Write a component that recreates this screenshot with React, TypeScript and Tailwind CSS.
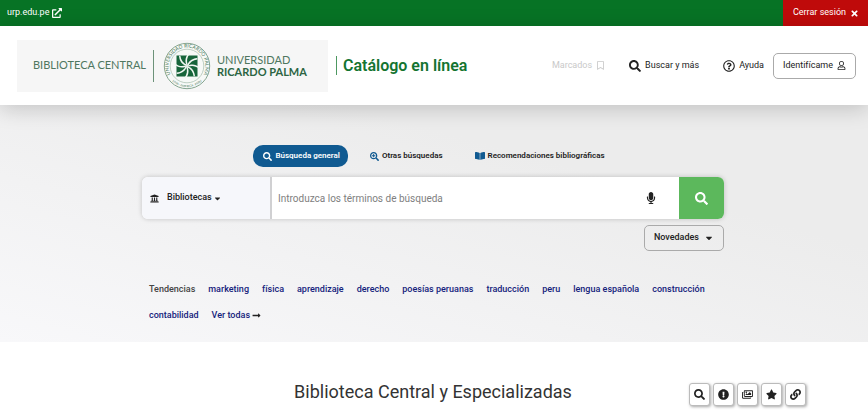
import {
  FaBookOpen,
  FaCaretDown,
  FaExclamationCircle,
  FaExternalLinkAlt,
  FaLink,
  FaLongArrowAltRight,
  FaMicrophone,
  FaRegBookmark,
  FaRegImages,
  FaRegQuestionCircle,
  FaRegUser,
  FaSearch,
  FaSearchPlus,
  FaStar,
  FaTimes,
  FaUniversity,
} from "react-icons/fa";

const trends = [
  "marketing",
  "física",
  "aprendizaje",
  "derecho",
  "poesías peruanas",
  "traducción",
  "peru",
  "lengua española",
  "construcción",
  "contabilidad",
];

const tools = [
  { label: "Buscar", Icon: FaSearch },
  { label: "Información", Icon: FaExclamationCircle },
  { label: "Imágenes", Icon: FaRegImages },
  { label: "Favoritos", Icon: FaStar },
  { label: "Enlace", Icon: FaLink },
];

const blades = [0, 45, 90, 135, 180, 225, 270, 315];

function Seal() {
  return (
    <svg viewBox="-24 -24 48 48" className="size-12 shrink-0" aria-hidden="true">
      <defs>
        <path id="ring-top" d="M-13 13 A18.4 18.4 0 1 1 13 13" />
        <path id="ring-bottom" d="M-15 15 A21.2 21.2 0 0 0 15 15" />
      </defs>
      <circle r="22.7" fill="#f7f9f7" stroke="#789c85" strokeWidth="0.9" />
      <circle r="16.8" fill="none" stroke="#a4bcab" strokeWidth="0.7" />
      <text fontSize="5" fill="#4d7c5e" fontFamily="Lato, sans-serif">
        <textPath href="#ring-top" startOffset="50%" textAnchor="middle">
          UNIVERSIDAD RICARDO PALMA
        </textPath>
      </text>
      <text fontSize="3" fill="#4d7c5e" fontFamily="Lato, sans-serif">
        <textPath href="#ring-bottom" startOffset="50%" textAnchor="middle">
          LIMA · AMERICA · PERU
        </textPath>
      </text>
      <rect x="-10.5" y="-10.5" width="21" height="21" fill="#17653a" />
      {blades.map((angle) => (
        <path
          key={angle}
          d="M0 0 C1 -4 4 -7.5 10.3 -8 L10.3 -6.6 C6 -6 3 -4 1.2 0Z"
          fill="#f1f7f2"
          transform={`rotate(${angle})`}
        />
      ))}
    </svg>
  );
}

export default function App() {
  return (
    <div className="min-h-screen bg-white font-[Roboto,'Liberation_Sans',sans-serif] text-[9px] text-[#222]">
      <div className="flex h-[26px] items-stretch justify-between bg-[#077325] text-white">
        <a href="#urp" className="flex items-center gap-[3px] pl-[7px]">
          urp.edu.pe <FaExternalLinkAlt className="size-[10px]" />
        </a>
        <button className="flex items-center gap-1 bg-[#bf0a0a] pr-[9px] pl-[10px]">
          Cerrar sesión <FaTimes className="size-[9px]" />
        </button>
      </div>

      <header className="relative flex h-[79px] items-center justify-between bg-white pr-3 pl-[17px] shadow-[0_4px_20px_rgba(0,0,0,0.18)]">
        <div className="flex items-center">
          <div className="flex h-[52px] w-[311px] items-center bg-[#f6f6f6] pl-4 font-[Lato,sans-serif] text-[11px] text-[#4f7760]">
            <span className="w-[120px] whitespace-nowrap">BIBLIOTECA CENTRAL</span>
            <span className="mr-[9px] h-8 w-px bg-[#6c9279]" />
            <Seal />
            <span className="ml-[6px] leading-3 whitespace-nowrap">
              UNIVERSIDAD
              <b className="block text-[#2c6543]">RICARDO PALMA</b>
            </span>
          </div>
          <h1 className="ml-2 border-l border-[#4d9861] pl-[6px] text-[16px] leading-[19px] font-semibold text-[#147431]">
            Catálogo en línea
          </h1>
        </div>
        <nav className="flex items-center">
          <a href="#marcados" className="mr-6 flex items-center gap-1 text-[#c9c9c9]">
            Marcados <FaRegBookmark className="size-[9px]" />
          </a>
          <a href="#buscar" className="mr-6 flex items-center gap-1">
            <FaSearch className="size-3" /> Buscar y más
          </a>
          <a href="#ayuda" className="mr-[9px] flex items-center gap-1">
            <FaRegQuestionCircle className="size-3" /> Ayuda
          </a>
          <button className="flex h-[26px] items-center gap-1 rounded-[5px] border border-[#aaa] px-[9px]">
            Identifícame <FaRegUser className="size-[9px]" />
          </button>
        </nav>
      </header>

      <main>
        <section className="bg-[linear-gradient(to_top_right,#f8f8fa_0%,#f2f2f3_35%,#ececec_70%,#ececec_100%)] pt-10 pr-[18px] pb-[14px] pl-4">
          <nav className="flex h-[22px] justify-center gap-3 pl-[2px] text-[8px] font-semibold">
            <a href="#general" className="flex items-center gap-[3px] rounded-[10px] bg-[#105a91] pr-2 pl-[10px] text-white">
              <FaSearch className="size-[9px]" /> Búsqueda general
            </a>
            <a href="#otras" className="flex items-center gap-[3px] px-[10px]">
              <FaSearchPlus className="size-[9px] text-[#105a91]" /> Otras búsquedas
            </a>
            <a href="#recomendaciones" className="flex items-center gap-[3px] px-[10px]">
              <FaBookOpen className="size-[10px] text-[#105a91]" /> Recomendaciones bibliográficas
            </a>
          </nav>

          <div className="mx-auto mt-[10px] max-w-[582px]">
            <form
              className="flex h-[42px] overflow-hidden rounded-md bg-white shadow-[0_0_5px_rgba(0,0,0,0.2)]"
              onSubmit={(event) => event.preventDefault()}
            >
              <div className="flex w-[130px] items-center border-r-2 border-[#d0d0d2] bg-[#f6f7fb] pl-2">
                <label htmlFor="scope">
                  <FaUniversity className="mr-2 size-[9px]" aria-label="Bibliotecas" />
                </label>
                <select id="scope" className="w-[46px] appearance-none bg-transparent font-medium outline-none">
                  <option>Bibliotecas</option>
                </select>
                <FaCaretDown className="size-[9px]" />
              </div>
              <input
                type="search"
                aria-label="Términos de búsqueda"
                placeholder="Introduzca los términos de búsqueda"
                className="min-w-0 flex-1 pl-[6px] text-[10px] outline-none placeholder:text-[#808080]"
              />
              <button type="button" aria-label="Búsqueda por voz" className="px-[22px]">
                <FaMicrophone className="size-3" />
              </button>
              <button aria-label="Buscar" className="flex w-[45px] items-center justify-center bg-[#5cb85c] text-white">
                <FaSearch className="size-[13px]" />
              </button>
            </form>
            <div className="mt-[6px] flex justify-end">
              <button className="flex h-[26px] items-center gap-[5px] rounded-[5px] border border-[#aaa] px-[9px] font-medium">
                Novedades <FaCaretDown className="size-[10px]" />
              </button>
            </div>
            <ul className="mt-[25px] flex flex-wrap gap-x-[13px] px-[7px] leading-[26px] font-medium text-[#14227c]">
              <li className="text-[#444]">Tendencias</li>
              {trends.map((trend) => (
                <li key={trend}>
                  <a href="#tendencia">{trend}</a>
                </li>
              ))}
              <li>
                <a href="#todas" className="flex items-center gap-[2px]">
                  Ver todas <FaLongArrowAltRight className="size-[9px] text-[#222]" />
                </a>
              </li>
            </ul>
          </div>
        </section>

        <section className="grid grid-cols-[1fr_auto_1fr] items-center pt-[35px] pr-[2px]">
          <h2 className="col-start-2 text-[18px] leading-6 text-[#333]">Biblioteca Central y Especializadas</h2>
          <div className="flex justify-end gap-[3px] pt-[6px] pr-[60px]">
            {tools.map(({ label, Icon }) => (
              <button
                key={label}
                aria-label={label}
                className="flex h-[23px] w-[21px] items-center justify-center rounded-[3px] border border-[#bbb] bg-white shadow-[1px_1px_3px_rgba(0,0,0,0.35)]"
              >
                <Icon className="size-[11px]" />
              </button>
            ))}
          </div>
        </section>
      </main>
    </div>
  );
}
